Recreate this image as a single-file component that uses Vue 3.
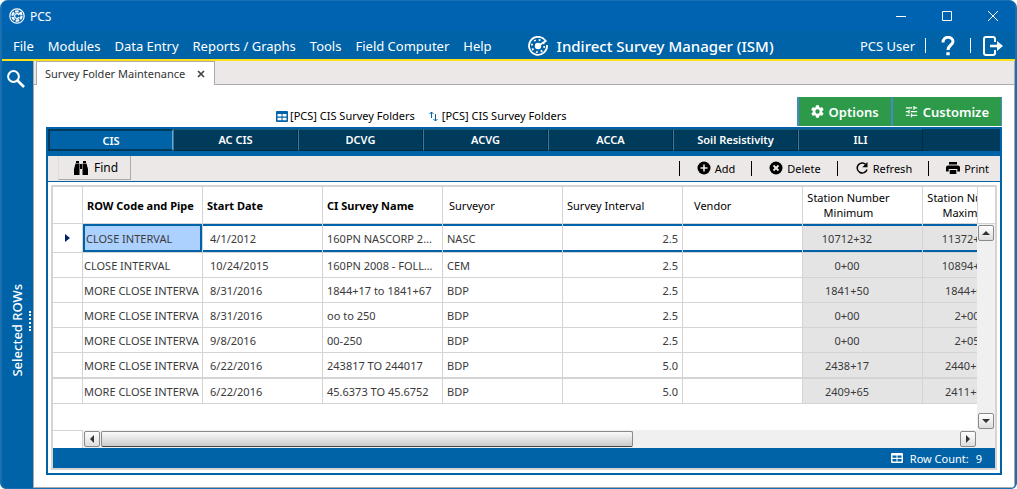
<script setup>
import { ref } from 'vue'

const menu = ['File', 'Modules', 'Data Entry', 'Reports / Graphs', 'Tools', 'Field Computer', 'Help']
const tabs = ['CIS', 'AC CIS', 'DCVG', 'ACVG', 'ACCA', 'Soil Resistivity', 'ILI']
const activeTab = ref('CIS')

const rows = [
  ['CLOSE INTERVAL', '4/1/2012', '160PN NASCORP 2012', 'NASC', '2.5', '', '10712+32', '11372+48'],
  ['CLOSE INTERVAL', '10/24/2015', '160PN 2008 - FOLLOW', 'CEM', '2.5', '', '0+00', '10894+20'],
  ['MORE CLOSE INTERVA', '8/31/2016', '1844+17 to 1841+67', 'BDP', '2.5', '', '1841+50', '1844+00'],
  ['MORE CLOSE INTERVA', '8/31/2016', 'oo to 250', 'BDP', '2.5', '', '0+00', '2+00'],
  ['MORE CLOSE INTERVA', '9/8/2016', '00-250', 'BDP', '2.5', '', '0+00', '2+05'],
  ['MORE CLOSE INTERVA', '6/22/2016', '243817 TO 244017', 'BDP', '5.0', '', '2438+17', '2440+17'],
  ['MORE CLOSE INTERVA', '6/22/2016', '45.6373 TO 45.6752', 'BDP', '5.0', '', '2409+65', '2411+65'],
]
const cellClass = ['row-code', 'date', 'name', '', 'num', '', 'station', 'station']
</script>

<template>
  <div class="window">
    <header class="titlebar">
      <svg class="logo" viewBox="0 0 16 16" width="16" height="16" fill="none" stroke="#fff">
        <circle cx="8" cy="8" r="7.2" stroke-width="1.2" />
        <circle cx="8" cy="8" r="4.6" stroke-width="2.2" stroke-dasharray="3.6 1.2" />
        <path d="M9.8 6.4A2.4 2.4 0 1 0 10.2 9M9 7l4-3" stroke-width="1.2" />
      </svg>
      <span class="app-name">PCS</span>
      <div class="window-buttons">
        <button aria-label="Minimize"><svg viewBox="0 0 12 12" width="12" height="12"><path d="M1 6.500H11" /></svg></button>
        <button aria-label="Maximize"><svg viewBox="0 0 12 12" width="12" height="12"><path d="M1.500 1.500H10.500V10.500H1.500Z" /></svg></button>
        <button aria-label="Close"><svg viewBox="0 0 12 12" width="12" height="12"><path d="M1 1L11 11M11 1L1 11" /></svg></button>
      </div>
    </header>

    <nav class="menubar">
      <a v-for="m in menu" :key="m" href="#">{{ m }}</a>
      <h1>
        <svg viewBox="0 0 20 20" width="20" height="20" fill="none" stroke="#fff">
          <path d="M17.300 4.500A9 9 0 1 0 19 9" stroke-width="1.800" />
          <circle cx="10" cy="10" r="3.200" fill="#fff" stroke="none" />
          <path d="M10 10L18.500 4.500" stroke-width="1.800" />
          <circle cx="10" cy="10" r="6.200" stroke-width="1.800" stroke-dasharray="1.800 3.070" />
        </svg>
        Indirect Survey Manager (ISM)
      </h1>
      <div class="user">
        <span>PCS User</span>
        <i></i>
        <button aria-label="Help">
          <svg viewBox="0 0 14 20" width="14" height="20" fill="none" stroke="#fff" stroke-width="3">
            <path d="M2 6.500C2 -0.500 12 0 12 5.500C12 9 7 9.200 7 14" /><path d="M5.300 17.800H8.700" />
          </svg>
        </button>
        <i></i>
        <button aria-label="Log out">
          <svg viewBox="0 0 20 20" width="20" height="20" fill="none" stroke="#fff" stroke-width="2">
            <path d="M12 6V3Q12 1 10 1H3Q1 1 1 3V17Q1 19 3 19H10Q12 19 12 17V14" />
            <path d="M7 10H15" stroke-width="2.600" /><path d="M14 5L20 10L14 15Z" fill="#fff" stroke="none" />
          </svg>
        </button>
      </div>
    </nav>

    <div class="body">
      <aside>
        <button class="search" aria-label="Search">
          <svg viewBox="0 0 18 18" width="18" height="18" fill="none" stroke="#fff">
            <circle cx="6.500" cy="6.500" r="5.400" stroke-width="2" /><path d="M10.500 10.500L17 17" stroke-width="2.600" />
          </svg>
        </button>
        <div class="side-label"><span>Selected ROWs</span></div>
        <div class="grip"></div>
      </aside>

      <main>
        <div class="doc-tabs">
          <div class="doc-tab">
            <span>Survey Folder Maintenance</span>
            <button aria-label="Close tab"><svg viewBox="0 0 8 8" width="8" height="8"><path d="M1 1L7 7M7 1L1 7" stroke="#444" stroke-width="1.700" /></svg></button>
          </div>
        </div>

        <div class="content">
          <div class="top-row">
            <div class="captions">
              <span>
                <svg viewBox="0 0 12 11" width="12" height="11"><rect width="12" height="11" rx="1" fill="#0063a8" /><path d="M1.500 3h4v2.500h-4zM6.500 3h4v2.500h-4zM1.500 6.800h4v2.400h-4zM6.500 6.800h4v2.400h-4z" fill="#fff" /></svg>
                [PCS] CIS Survey Folders
              </span>
              <span class="sorted">
                <svg viewBox="0 0 9 11" width="9" height="11" fill="none" stroke="#0063a8"><path d="M2.500 7V1M0.500 3L2.500 1L4.500 3M6.500 3V10M4.500 8L6.500 10L8.500 8" /></svg>
                [PCS] CIS Survey Folders
              </span>
            </div>
            <div class="green">
              <button>
                <svg viewBox="0 0 24 24" width="15" height="15"><path fill="#fff" d="M19.400 13a7.500 7.500 0 0 0 0-2l2.100-1.600a.5.500 0 0 0 .1-.7l-2-3.400a.5.500 0 0 0-.6-.2l-2.500 1a7.300 7.300 0 0 0-1.700-1l-.4-2.600a.5.500 0 0 0-.5-.5h-4a.5.500 0 0 0-.5.500L9 5.100a7.300 7.300 0 0 0-1.700 1l-2.500-1a.5.500 0 0 0-.6.200l-2 3.400a.5.500 0 0 0 .1.700L4.500 11a7.500 7.500 0 0 0 0 2l-2.200 1.600a.5.500 0 0 0-.1.700l2 3.400c.1.200.4.300.6.200l2.500-1a7.300 7.300 0 0 0 1.700 1l.4 2.600c0 .3.200.5.500.5h4c.3 0 .5-.2.500-.5l.4-2.600a7.300 7.300 0 0 0 1.700-1l2.500 1c.2.100.5 0 .6-.2l2-3.400a.5.500 0 0 0-.1-.7zM12 15.500a3.500 3.500 0 1 1 0-7 3.500 3.500 0 0 1 0 7z" /></svg>
                Options
              </button>
              <button>
                <svg viewBox="0 0 24 24" width="15" height="15"><path fill="#fff" d="M3 17v2h6v-2H3zM3 5v2h10V5H3zm10 16v-2h8v-2h-8v-2h-2v6h2zM7 9v2H3v2h4v2h2V9H7zm14 4v-2H11v2h10zm-6-4h2V7h4V5h-4V3h-2v6z" /></svg>
                Customize
              </button>
            </div>
          </div>

          <section class="panel">
            <div class="tabs" role="tablist">
              <button v-for="t in tabs" :key="t" role="tab" :class="{ active: t === activeTab }" @click="activeTab = t">{{ t }}</button>
            </div>

            <div class="toolbar">
              <button class="find">
                <svg viewBox="0 0 16 16" width="16" height="16"><path d="M3 1h3v2H3zM10 1h3v2h-3zM2.500 3.500H6.500V15H1V9zM9.500 3.500H13.500L15 9V15H9.500zM7 4h2v5H7z" /></svg>
                Find
              </button>
              <div class="actions">
                <i></i>
                <button><svg viewBox="0 0 14 14" width="14" height="14"><circle cx="7" cy="7" r="6.500" /><path d="M7 3.500V10.500M3.500 7H10.500" stroke="#ece8e7" stroke-width="1.600" /></svg>Add</button>
                <i></i>
                <button><svg viewBox="0 0 14 14" width="14" height="14"><circle cx="7" cy="7" r="6.500" /><path d="M4.500 4.500L9.500 9.500M9.500 4.500L4.500 9.500" stroke="#ece8e7" stroke-width="1.800" /></svg>Delete</button>
                <i></i>
                <button><svg viewBox="0 0 14 14" width="14" height="14"><path d="M10.800 3.500A5 5 0 1 0 12 8.500" fill="none" stroke="#000" stroke-width="1.500" /><path d="M12.500 1V6.200H7.300Z" /></svg>Refresh</button>
                <i></i>
                <button><svg viewBox="0 0 14 14" width="14" height="14"><path d="M3 1H11V3.500H3ZM2 4.500H12Q14 4.500 14 6.500V10.500H11.300V8H2.700V10.500H0V6.500Q0 4.500 2 4.500ZM3.700 9H10.300V13H3.700Z" /></svg>Print</button>
              </div>
            </div>

            <div class="grid">
              <div class="grid-main">
                <div class="table-clip">
                  <table>
                    <thead>
                      <tr>
                        <th class="mark"></th>
                        <th class="bold">ROW Code and Pipe</th>
                        <th class="bold">Start Date</th>
                        <th class="bold">CI Survey Name</th>
                        <th class="surveyor">Surveyor</th>
                        <th>Survey Interval</th>
                        <th class="vendor">Vendor</th>
                        <th class="station">Station Number<br>Minimum</th>
                        <th class="station">Station Number<br>Maximum</th>
                      </tr>
                    </thead>
                    <tbody>
                      <tr v-for="(r, i) in rows" :key="i" :class="{ selected: i === 0, thick: i === 5 }">
                        <td class="mark"><svg v-if="i === 0" viewBox="0 0 5 8" width="5" height="8"><path d="M0 0L5 4L0 8Z" fill="#00206b" /></svg></td>
                        <td v-for="(c, j) in r" :key="j" :class="cellClass[j]">{{ c }}</td>
                      </tr>
                    </tbody>
                  </table>
                </div>
                <div class="vscroll">
                  <div class="corner"></div>
                  <button aria-label="Scroll up"><svg viewBox="0 0 8 4" width="8" height="4"><path d="M0 4L4 0L8 4Z" /></svg></button>
                  <div class="track"></div>
                  <button aria-label="Scroll down"><svg viewBox="0 0 8 4" width="8" height="4"><path d="M0 0H8L4 4Z" /></svg></button>
                </div>
              </div>
              <div class="hscroll">
                <div class="stub"></div>
                <button aria-label="Scroll left"><svg viewBox="0 0 4 8" width="4" height="8"><path d="M4 0V8L0 4Z" /></svg></button>
                <div class="htrack"><div class="thumb"></div></div>
                <button aria-label="Scroll right"><svg viewBox="0 0 4 8" width="4" height="8"><path d="M0 0V8L4 4Z" /></svg></button>
                <div class="end"></div>
              </div>
              <footer>
                <svg viewBox="0 0 12 10" width="12" height="10"><rect width="12" height="10" rx="1" fill="#fff" /><path d="M1.500 2.500h4v2.300h-4zM6.500 2.500h4v2.300h-4zM1.500 6h4v2.400h-4zM6.500 6h4v2.400h-4z" fill="#0063a8" /></svg>
                <span>Row Count:</span><span>9</span>
              </footer>
            </div>
          </section>
        </div>
      </main>
    </div>
  </div>
</template>

<style>
html, body { margin: 0; background: #fff; }
</style>

<style scoped>
* { box-sizing: border-box; }
button { border: 0; padding: 0; margin: 0; background: none; font: inherit; color: inherit; display: flex; align-items: center; }
svg { display: block; flex: none; }
.window {
  min-height: 100vh; display: flex; flex-direction: column;
  border: 1px solid #1a6fb0; border-width: 1px 2px 1px 2px; border-radius: 8px 8px 6px 6px; overflow: hidden;
  background: #0063a8; font-family: "Noto Sans", "Open Sans", sans-serif; font-size: 11px; color: #000;
}
.titlebar { height: 30px; background: #0063b1; color: #fff; display: flex; align-items: center; padding-left: 7px; gap: 5px; font-size: 12px; }
.window-buttons { margin-left: auto; margin-right: -1px; display: flex; }
.window-buttons button { width: 46px; height: 28px; justify-content: center; }
.window-buttons path { fill: none; stroke: #fff; }
.menubar { height: 30px; border-bottom: 2px solid #ffe11a; color: #fff; display: flex; align-items: center; padding: 1px 10px 0 11px; gap: 14px; font-size: 13px; white-space: nowrap; }
.menubar a { color: inherit; text-decoration: none; }
h1 { margin: 0 0 0 22px; font-size: 15px; font-weight: 500; display: flex; align-items: center; gap: 9px; }
.user { margin-left: auto; display: flex; align-items: center; }
.user i { width: 1px; height: 15px; background: #fff; margin: 0 10px; }
.user button { min-width: 24px; justify-content: center; }
.body { flex: 1; display: flex; }
aside { width: 31px; display: flex; flex-direction: column; position: relative; align-items: center; color: #fff; }
.search { margin-top: 9px; margin-right: 3px; }
.side-label { margin-top: 196px; height: 94px; overflow: hidden; font-size: 13px; font-weight: 500; line-height: 18px; margin-right: 2px; }
.side-label span { writing-mode: vertical-rl; transform: rotate(180deg); white-space: nowrap; display: block; }
.grip { position: absolute; right: 2px; top: 250px; height: 20px; border-left: 2px dotted #fff; }
main { flex: 1; min-width: 0; background: #fff; border: 1px solid #aaa; border-top: 0; display: flex; flex-direction: column; }
.doc-tabs { height: 24px; background: #ece8e7; border-bottom: 1px solid #aaa; padding-left: 2px; display: flex; }
.doc-tab { height: 24px; background: #fff; border: 1px solid #aaa; border-bottom: 0; display: flex; align-items: center; gap: 12px; padding: 0 9px 0 8px; color: #333; }
.content { flex: 1; display: flex; flex-direction: column; padding: 12px; }
.top-row { display: flex; height: 30px; }
.captions { flex: 1; display: flex; justify-content: center; align-items: flex-end; gap: 14px; padding-bottom: 3px; }
.captions span { display: flex; align-items: center; gap: 2px; line-height: 16px; }
.captions .sorted { gap: 4px; }
.green { display: flex; background: #2d9a4a; border-right: 1px solid #4a86c8; color: #fff; font-size: 13px; font-weight: 600; height: 29px; }
.green button { border-left: 2px solid #4a86c8; padding: 0 12px 0 11px; gap: 4px; }
.panel { flex: 1; border: 2px solid #0063a8; display: flex; flex-direction: column; }
.tabs { display: flex; background: #003b5c; border-bottom: 5px solid #0063a8; height: 27px; }
.tabs button { width: 125px; height: 22px; justify-content: center; padding-bottom: 1px; color: #fff; font-weight: 600; border: 1px solid #002b45; border-left-color: #3f7894; border-top-color: #1f5873; }
.tabs button.active { background: #0063a8; border: 2px solid #003b5c; border-right: 1px solid #6ba5d0; padding-bottom: 0; }
.toolbar { display: flex; justify-content: space-between; height: 26px; background: #ece8e7; border-bottom: 1px solid #0063a8; padding: 0 11px 0 10px; }
.find { height: 24px; padding: 0 12px 0 14px; gap: 5px; border: 1px solid #aaa; border-top: 0; border-left-color: #ddd; font-size: 12px; }
.actions { display: flex; align-items: center; height: 24px; }
.actions button { gap: 4px; }
.actions i { width: 1px; height: 15px; background: #000; margin: 0 17px 0 16px; }
.grid { flex: 1; margin: 3px; border: 2px solid #d4d4d4; display: flex; flex-direction: column; }
.grid-main { flex: 1; display: flex; min-height: 243px; }
.table-clip { flex: 1; width: 0; overflow: hidden; }
table { table-layout: fixed; border-collapse: separate; border-spacing: 0; width: 990px; }
th, td { width: 120px; height: 25px; padding: 0 4px; border-right: 1px solid #d4d4d4; border-bottom: 1px solid #d4d4d4; text-align: left; font-weight: 400; overflow: hidden; white-space: nowrap; line-height: 15px; }
th { height: 37px; }
th.bold { font-weight: 700; }
th.surveyor { padding-left: 6px; }
th.vendor { padding-left: 11px; }
td { color: #3a3a3a; }
.mark { width: 30px; padding-left: 12px; }
th.station, td.station { text-align: center; padding: 0 28px 0 0; }
td.station { background: #e4e4e4; padding-right: 31px; }
td.row-code { padding: 0 1px; text-overflow: clip; }
td.date { padding-left: 7px; }
td.name { text-overflow: ellipsis; }
td.num { text-align: right; }
.selected td { height: 29px; box-shadow: inset 0 2px #0063a8, inset 0 -2px #0063a8; }
.selected td.mark { box-shadow: none; }
.selected td.row-code { background: #add1ff; box-shadow: inset 0 0 0 2px #0063a8; padding-left: 3px; }
.thick td { height: 26px; border-bottom-width: 2px; }
.vscroll { width: 18px; display: flex; flex-direction: column; background: #f0f0f0; }
.corner { height: 37px; background: #fff; border-left: 1px solid #d4d4d4; border-bottom: 1px solid #d4d4d4; }
.track { flex: 1; }
.vscroll button, .hscroll button { width: 16px; height: 16px; margin: 1px; justify-content: center; border: 1px solid #8a8a8a; border-radius: 2px; background: linear-gradient(#fff, #ddd); }
.vscroll path, .hscroll path { fill: #333; }
.hscroll { display: flex; height: 18px; background: #f0f0f0; }
.stub { width: 30px; background: #fff; border-top: 1px solid #d4d4d4; border-right: 1px solid #d4d4d4; }
.htrack { flex: 1; }
.thumb { width: 62%; height: 16px; margin-top: 1px; border: 1px solid #8a8a8a; border-bottom-color: #444; border-radius: 2px; background: linear-gradient(#fafafa, #ccc); }
.end { width: 18px; }
footer { height: 20px; background: #0063a8; color: #fff; display: flex; align-items: center; justify-content: flex-end; gap: 7px; padding-right: 13px; }
</style>
